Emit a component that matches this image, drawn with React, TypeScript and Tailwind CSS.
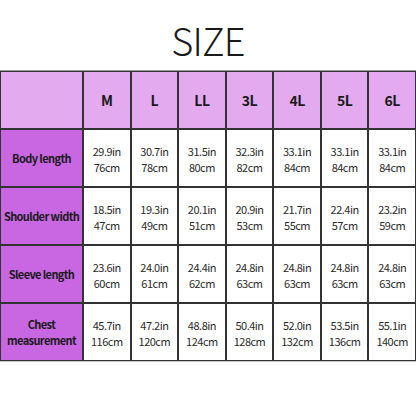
import React from "react";

const sizes = ["M", "L", "LL", "3L", "4L", "5L", "6L"];
const rows: { label: string[]; vals: [string, string][] }[] = [
  {
    label: ["Body length"],
    vals: [
      ["29.9in", "76cm"],
      ["30.7in", "78cm"],
      ["31.5in", "80cm"],
      ["32.3in", "82cm"],
      ["33.1in", "84cm"],
      ["33.1in", "84cm"],
      ["33.1in", "84cm"],
    ],
  },
  {
    label: ["Shoulder width"],
    vals: [
      ["18.5in", "47cm"],
      ["19.3in", "49cm"],
      ["20.1in", "51cm"],
      ["20.9in", "53cm"],
      ["21.7in", "55cm"],
      ["22.4in", "57cm"],
      ["23.2in", "59cm"],
    ],
  },
  {
    label: ["Sleeve length"],
    vals: [
      ["23.6in", "60cm"],
      ["24.0in", "61cm"],
      ["24.4in", "62cm"],
      ["24.8in", "63cm"],
      ["24.8in", "63cm"],
      ["24.8in", "63cm"],
      ["24.8in", "63cm"],
    ],
  },
  {
    label: ["Chest", "measurement"],
    vals: [
      ["45.7in", "116cm"],
      ["47.2in", "120cm"],
      ["48.8in", "124cm"],
      ["50.4in", "128cm"],
      ["52.0in", "132cm"],
      ["53.5in", "136cm"],
      ["55.1in", "140cm"],
    ],
  },
];

export default function App() {
  return (
    <div
      className="w-[416px] h-[416px] bg-white text-[#1a1a1a] overflow-hidden"
      style={{ fontFamily: '"Noto Sans CJK JP", "Noto Sans", sans-serif' }}
    >
      <div className="h-[70px] flex items-center justify-center pt-[9px]">
        <span className="text-[38px] leading-none font-light tracking-[-0.8px]">SIZE</span>
      </div>
      <div className="w-[416px] p-[1px] bg-[#333] border-t border-[#9a9a9a] grid grid-cols-[81px_repeat(7,minmax(0,1fr))] grid-rows-[repeat(5,56px)] gap-[2px] shadow-[0_1px_0_#c8c8c8]">
        <div className="bg-[#e3aaf0]" />
        {sizes.map((s) => (
          <div key={s} className="bg-[#e3aaf0] flex items-center justify-center text-[14px] font-bold tracking-[-0.5px]">
            {s}
          </div>
        ))}
        {rows.map((r, i) => (
          <React.Fragment key={i}>
            <div className="bg-[#c967e3] flex flex-col items-center justify-center text-center text-[11px] font-bold tracking-[-0.6px] whitespace-nowrap">
              {r.label.map((l) => (
                <span key={l} className="block leading-[16px]">
                  {l}
                </span>
              ))}
            </div>
            {r.vals.map(([a, b], j) => (
              <div
                key={j}
                className="bg-white flex flex-col items-center justify-center text-[11px] tracking-[-0.5px] text-[#2a2a2a] pt-[2px]"
              >
                <span className="block leading-[16px]">{a}</span>
                <span className="block leading-[16px]">{b}</span>
              </div>
            ))}
          </React.Fragment>
        ))}
      </div>
    </div>
  );
}
